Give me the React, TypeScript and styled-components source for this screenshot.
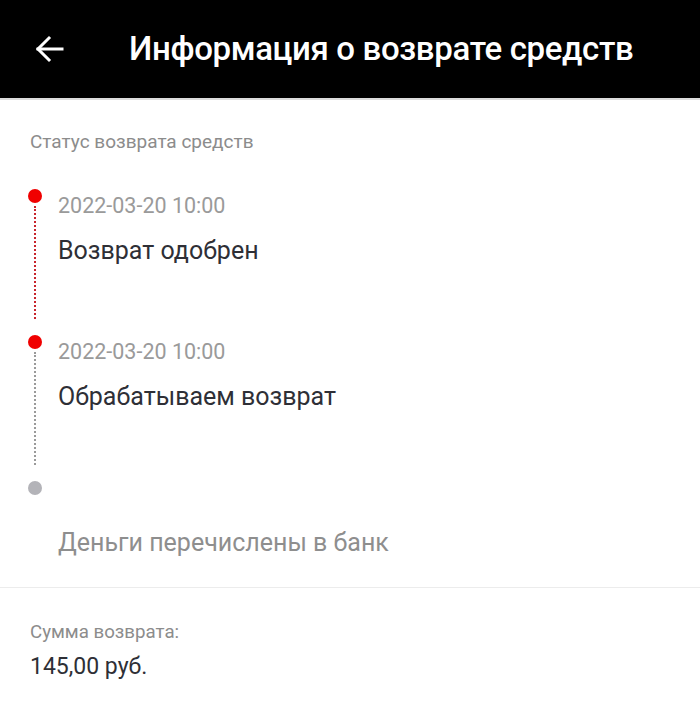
import React from "react";
import styled, { createGlobalStyle } from "styled-components";

const GlobalStyle = createGlobalStyle`
    body{
        margin:0;
        background:#fff;
        font-family:Roboto, "Noto Sans", sans-serif;
    }
`;

const Header = styled.header`
    height:98px;
    background:#000;
    border-bottom:2px solid #dcdcdc;
    display:flex;
    align-items:center;
    padding-left:35px;
    gap:64px;
`;
const BackButton = styled.button`
    background:none;
    border:none;
    padding:0;
    width:30px;
    height:30px;
    display:flex;
    align-items:center;
    justify-content:center;
    cursor:pointer;
`;
const Title = styled.h1`
    margin:0;
    color:#fff;
    font-size:33px;
    font-weight:500;
    letter-spacing:-0.35px;
    line-height:40px;
`;

const Section = styled.section`
    padding:30px 30px 28px 28px;
    border-bottom:1px solid #ececec;
`;
const SectionLabel = styled.div`
    font-size:19px;
    line-height:24px;
    color:#8c8c8c;
    padding-left:2px;
`;

const Timeline = styled.div`
    margin-top:35px;
`;
const Step = styled.div<{ $last?: boolean }>`
    display:grid;
    grid-template-columns:14px 1fr;
    column-gap:16px;
    height:${({ $last }) => ($last ? "auto" : "146px")};
`;
const Marker = styled.div`
    display:flex;
    flex-direction:column;
    align-items:center;
`;
const Dot = styled.div<{ $active: boolean }>`
    width:14px;
    height:14px;
    border-radius:50%;
    background:${({ $active }) => ($active ? "#f00000" : "#b3b3b8")};
    flex-shrink:0;
`;
const Line = styled.div<{ $active: boolean }>`
    flex:1;
    margin:3px 0 16px;
    border-left:2px dotted ${({ $active }) => ($active ? "#c8232c" : "#9a9a9a")};
`;
const StepText = styled.div`
    padding-top:4px;
`;
const StepDate = styled.div`
    font-size:21.5px;
    line-height:26px;
    height:26px;
    color:#9a9a9a;
`;
const StepTitle = styled.div<{ $done: boolean }>`
    margin-top:16px;
    font-size:25px;
    line-height:32px;
    color:${({ $done }) => ($done ? "#2e2f36" : "#8e8e8e")};
`;

const Summary = styled.section`
    padding:32px 30px;
`;
const SummaryLabel = styled.div`
    font-size:18.7px;
    line-height:24px;
    color:#8c8c8c;
`;
const SummaryValue = styled.div`
    margin-top:8px;
    font-size:23px;
    line-height:30px;
    color:#2e2f36;
`;

const steps = [
    { date: "2022-03-20 10:00", title: "Возврат одобрен", done: true },
    { date: "2022-03-20 10:00", title: "Обрабатываем возврат", done: true },
    { date: "", title: "Деньги перечислены в банк", done: false },
];

function ArrowLeft(){
    return <svg width="30" height="28" viewBox="0 0 30 28" fill="none" stroke="#fff" strokeWidth="3" strokeLinecap="square">
        <path d="M3 14H27" />
        <path d="M14 3L3 14L14 25" />
    </svg>
}

export default function App(){
    return <>
        <GlobalStyle />
        <Header>
            <BackButton aria-label="Назад"><ArrowLeft /></BackButton>
            <Title>Информация о возврате средств</Title>
        </Header>
        <Section>
            <SectionLabel>Статус возврата средств</SectionLabel>
            <Timeline>
                {steps.map((step, index) => {
                    const last = index === steps.length - 1;
                    return <Step key={index} $last={last}>
                        <Marker>
                            <Dot $active={step.done} />
                            {!last && <Line $active={steps[index + 1].done} />}
                        </Marker>
                        <StepText>
                            <StepDate>{step.date}</StepDate>
                            <StepTitle $done={step.done}>{step.title}</StepTitle>
                        </StepText>
                    </Step>
                })}
            </Timeline>
        </Section>
        <Summary>
            <SummaryLabel>Сумма возврата:</SummaryLabel>
            <SummaryValue>145,00 руб.</SummaryValue>
        </Summary>
    </>
}
